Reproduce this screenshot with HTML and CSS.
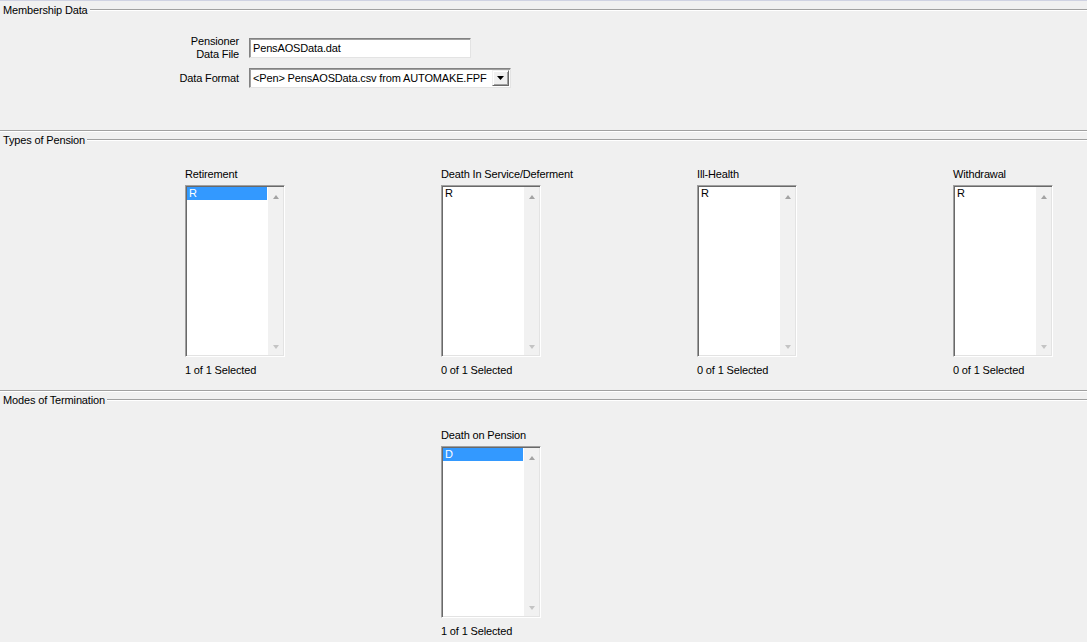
FILE: index.html
```html
<!DOCTYPE html>
<html>
<head>
<meta charset="utf-8">
<link rel="stylesheet" href="styles.css">
</head>
<body>
<div class="topline"></div>

<section class="group g-member">
  <div class="ghead"><span class="gtitle">Membership Data</span><i class="rule"></i></div>
  <div class="form">
    <label class="lbl">Pensioner<br>Data File</label>
    <div class="field input">PensAOSData.dat</div>
    <label class="lbl">Data Format</label>
    <div class="field select">
      <span class="seltext">&lt;Pen&gt; PensAOSData.csv from AUTOMAKE.FPF</span>
      <b class="drop"><svg width="7" height="4" viewBox="0 0 7 4"><path d="M0 0H7L3.5 4Z" fill="#000"/></svg></b>
    </div>
  </div>
</section>

<section class="group sep g-types">
  <div class="ghead"><span class="gtitle">Types of Pension</span><i class="rule"></i></div>
  <div class="cols">
    <div class="col">
      <div class="clabel">Retirement</div>
      <div class="listbox">
        <div class="items"><div class="item sel">R</div></div>
        <div class="sbar"><i class="up"></i><i class="down"></i></div>
      </div>
      <div class="caption">1 of 1 Selected</div>
    </div>
    <div class="col">
      <div class="clabel">Death In Service/Deferment</div>
      <div class="listbox">
        <div class="items"><div class="item">R</div></div>
        <div class="sbar"><i class="up"></i><i class="down"></i></div>
      </div>
      <div class="caption">0 of 1 Selected</div>
    </div>
    <div class="col">
      <div class="clabel">Ill-Health</div>
      <div class="listbox">
        <div class="items"><div class="item">R</div></div>
        <div class="sbar"><i class="up"></i><i class="down"></i></div>
      </div>
      <div class="caption">0 of 1 Selected</div>
    </div>
    <div class="col">
      <div class="clabel">Withdrawal</div>
      <div class="listbox">
        <div class="items"><div class="item">R</div></div>
        <div class="sbar"><i class="up"></i><i class="down"></i></div>
      </div>
      <div class="caption">0 of 1 Selected</div>
    </div>
  </div>
</section>

<section class="group sep g-modes">
  <div class="ghead"><span class="gtitle">Modes of Termination</span><i class="rule"></i></div>
  <div class="cols cols-modes">
    <div class="col">
      <div class="clabel">Death on Pension</div>
      <div class="listbox">
        <div class="items"><div class="item sel">D</div></div>
        <div class="sbar"><i class="up"></i><i class="down"></i></div>
      </div>
      <div class="caption">1 of 1 Selected</div>
    </div>
  </div>
</section>
</body>
</html>
```

FILE: styles.css
```css
html, body {
  margin: 0;
  padding: 0;
  background: #f0f0f0;
  overflow: hidden;
}
body {
  width: 1087px;
  height: 642px;
  font-family: "Liberation Sans", Arial, sans-serif;
  font-size: 11px;
  letter-spacing: -0.15px;
  line-height: 13px;
  color: #000;
}
.topline {
  height: 1px;
  background: #cfd2e2;
}
.group {
  display: block;
}
.sep {
  border-top: 1px solid #a0a0a0;
  box-shadow: inset 0 1px 0 #ffffff;
}
.ghead {
  display: flex;
  align-items: center;
  height: 13px;
  padding-left: 3px;
}
.g-member .ghead { margin-top: 3px; }
.g-types .ghead { margin-top: 3px; }
.g-modes .ghead { margin-top: 3px; }
.gtitle {
  white-space: nowrap;
  padding-right: 2px;
}
.rule {
  flex: 1;
  height: 0;
  margin-top: -1px;
  border-top: 1px solid #a0a0a0;
  border-bottom: 1px solid #ffffff;
}

/* membership form */
.g-member {
  padding-bottom: 42px;
}
.form {
  display: grid;
  grid-template-columns: 239px auto;
  column-gap: 10px;
  row-gap: 7px;
  align-items: center;
  justify-items: start;
  margin-top: 18px;
}
.lbl {
  justify-self: end;
  text-align: right;
}
.field {
  box-sizing: border-box;
  height: 20px;
  background: #fff;
  border: 1px solid;
  border-color: #828282 #e3e3e3 #e3e3e3 #828282;
  box-shadow: inset 1px 1px 0 #a0a0a0;
  display: flex;
  align-items: center;
  padding-left: 3px;
  white-space: nowrap;
}
.input {
  width: 222px;
}
.select {
  width: 262px;
  padding-right: 1px;
}
.seltext {
  flex: 1;
}
.drop {
  box-sizing: border-box;
  width: 17px;
  height: 16px;
  background: #f0f0f0;
  border: 1px solid;
  border-color: #f0f0f0 #696969 #696969 #f0f0f0;
  box-shadow: inset 1px 1px 0 #fff, inset -1px -1px 0 #a0a0a0;
  display: flex;
  align-items: center;
  justify-content: center;
}
.drop svg { display: block; }

/* list columns */
.cols {
  display: flex;
  gap: 156px;
  padding-left: 185px;
  margin-top: 21px;
}
.g-types { padding-bottom: 13px; }
.cols-modes { padding-left: 441px; margin-top: 22px; }
.col {
  width: 100px;
  flex: none;
}
.clabel {
  white-space: nowrap;
  margin-bottom: 4px;
}
.listbox {
  box-sizing: border-box;
  width: 100px;
  height: 172px;
  border: 1px solid;
  border-color: #a0a0a0 #ffffff #ffffff #a0a0a0;
  box-shadow: inset 1px 1px 0 #696969, inset -1px -1px 0 #e3e3e3;
  background: #fff;
  padding: 1px;
  display: flex;
}
.items {
  flex: 1;
}
.item {
  height: 13px;
  line-height: 13px;
  padding-left: 2px;
}
.item.sel {
  background: #3399ff;
  color: #fff;
}
.sbar {
  width: 16px;
  flex: none;
  background: #f1f1f1;
  border-left: 1px solid #ffffff;
  display: flex;
  flex-direction: column;
  justify-content: space-between;
  align-items: center;
  padding: 8px 0 6px;
  box-sizing: border-box;
}
.up, .down {
  width: 0;
  height: 0;
  border-left: 3.5px solid transparent;
  border-right: 3.5px solid transparent;
}
.up { border-bottom: 4px solid #a3a3a3; }
.down { border-top: 4px solid #c4c4c4; }
.caption {
  margin-top: 7px;
  white-space: nowrap;
}
```
